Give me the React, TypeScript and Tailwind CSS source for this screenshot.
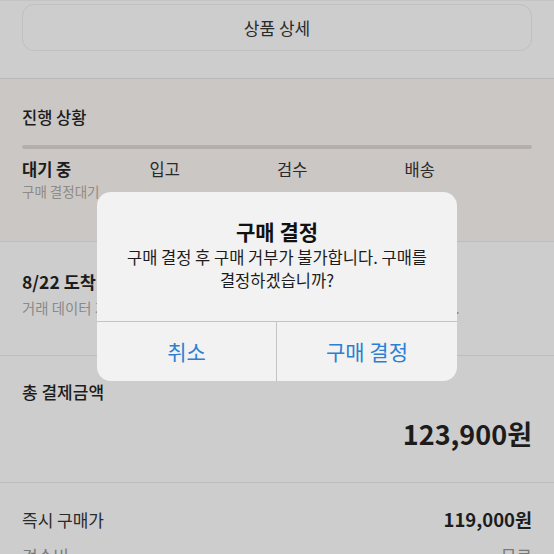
import React from "react";

export default function App() {
  const font = { fontFamily: '"Noto Sans CJK KR", "Noto Sans", sans-serif' };
  return (
    <div
      className="relative w-[554px] h-[554px] overflow-hidden bg-[#cdcdcd] text-[#1c1c1c]"
      style={font}
    >
      {/* top */}
      <div className="border-t border-[#c4c4c4] px-[22px] pt-[3px] pb-[27px]">
        <div className="h-[47px] rounded-[12px] border border-[#c0c0c0] flex items-center justify-center text-[17px] text-[#2a2a2a]">
          상품 상세
        </div>
      </div>

      {/* progress */}
      <div className="border-t border-[#b9b9b9] bg-[#cbc7c4] h-[163px] px-[22px] pt-[27px]">
        <div className="text-[16.5px] leading-[22px] font-medium">진행 상황</div>
        <div className="mt-[17px] h-[4px] rounded-full bg-[#b4afab]" />
        <div className="mt-[9px] grid grid-cols-4">
          <div>
            <div className="text-[16.5px] leading-[22px] font-bold">대기 중</div>
            <div className="mt-[2px] text-[13.5px] leading-[19px] text-[#8e8a87]">구매 결정대기</div>
          </div>
          <div className="text-[16.5px] leading-[22px] text-[#2a2a2a]">입고</div>
          <div className="text-[16.5px] leading-[22px] text-[#2a2a2a]">검수</div>
          <div className="text-[16.5px] leading-[22px] text-[#2a2a2a]">배송</div>
        </div>
      </div>

      {/* arrival */}
      <div className="border-t border-[#bdbdbd] h-[114px] px-[22px] pt-[29px]">
        <div className="text-[17.5px] leading-[22px] font-bold">8/22 도착 예정</div>
        <div className="mt-[5px] whitespace-nowrap text-[14.4px] leading-[20px] text-[#8a8a8a]">
          거래 데이터 기준 예상 도착일이며, 실제 도착일과는 다소 다를 수 있습니다.
        </div>
      </div>

      {/* total */}
      <div className="border-t border-[#bdbdbd] h-[127px] px-[22px] pt-[24px]">
        <div className="text-[17px] leading-[24px] font-medium">총 결제금액</div>
        <div className="mt-[13px] text-right text-[27px] leading-[34px] font-bold">123,900원</div>
      </div>

      {/* detail rows */}
      <div className="border-t border-[#bdbdbd] px-[22px] pt-[25px]">
        <div className="flex justify-between items-center h-[24px]">
          <span className="text-[17px] text-[#2a2a2a]">즉시 구매가</span>
          <span className="text-[18.5px] font-bold">119,000원</span>
        </div>
        <div className="mt-[12px] flex justify-between items-center h-[24px]">
          <span className="text-[17px] text-[#7a7a7a]">검수비</span>
          <span className="text-[17px] text-[#7a7a7a]">무료</span>
        </div>
      </div>

      {/* dialog */}
      <div className="absolute left-[97px] top-[192px] w-[360px] h-[189px] rounded-[14px] bg-[#f2f2f2] flex flex-col overflow-hidden">
        <div className="flex-1 flex flex-col items-center pt-[25px]">
          <div className="text-[21px] leading-[28px] font-bold text-[#111]">구매 결정</div>
          <div className="mt-[1px] text-[16.5px] leading-[23px] text-[#1c1c1c] text-center">
            <div className="whitespace-nowrap">구매 결정 후 구매 거부가 불가합니다. 구매를</div>
            <div className="whitespace-nowrap">결정하겠습니까?</div>
          </div>
        </div>
        <div className="h-[60px] border-t border-[#c4c4c4] grid grid-cols-2">
          <div className="flex items-center justify-center text-[21px] text-[#2e7fd2] border-r border-[#c4c4c4]">
            취소
          </div>
          <div className="flex items-center justify-center text-[21px] text-[#2e7fd2]">
            구매 결정
          </div>
        </div>
      </div>
    </div>
  );
}
